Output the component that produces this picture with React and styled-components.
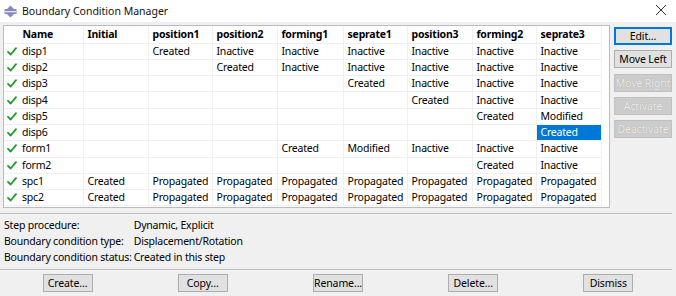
import React from "react";
import styled, { createGlobalStyle } from "styled-components";

const Global = createGlobalStyle`
  html, body { margin: 0; padding: 0; background: #f0f0f0; }
  * { box-sizing: border-box; }
`;

const Window = styled.div`
  width: 676px;
  height: 296px;
  background: #f0f0f0;
  font-family: "Noto Sans", "Noto Sans CJK SC", sans-serif;
  font-size: 10.5px;
  letter-spacing: -0.2px;
  line-height: 16px;
  color: #000;
  overflow: hidden;
  display: flex;
  flex-direction: column;
`;

const TitleBar = styled.div`
  height: 22px;
  background: #ffffff;
  display: flex;
  align-items: center;
  padding-left: 4px;
  position: relative;
`;

const TitleText = styled.span`
  margin-left: 5px;
  font-size: 10.5px;
  letter-spacing: 0;
  line-height: 22px;
  color: #111;
`;

const Close = styled.span`
  position: absolute;
  right: 9px;
  top: 4px;
  width: 12px;
  height: 12px;
  display: flex;
`;

const Body = styled.div`
  padding: 3px 4px 0 3px;
  display: flex;
  flex-direction: column;
`;

const TopRow = styled.div`
  display: flex;
  gap: 4px;
  align-items: flex-start;
`;

const TableFrame = styled.div`
  width: 607px;
  height: 183px;
  background: #fff;
  border: 1px solid #b9bcc2;
  overflow: hidden;
`;

const Grid = styled.table`
  border-collapse: collapse;
  table-layout: fixed;
  width: 597px;
`;

const Col = styled.col`
  width: ${(p) => p.$w}px;
`;

const HeadRow = styled.tr`
  height: 17px;
`;

const Row = styled.tr`
  height: 16.3px;
`;

const Th = styled.th`
  padding: 0 0 0 4px;
  text-align: left;
  font-weight: bold;
  white-space: nowrap;
  border-right: 1px solid ${(p) => (p.$noLine ? "transparent" : "#f0f0f0")};
  border-bottom: 1px solid #f0f0f0;
  line-height: 15px;
  overflow: hidden;
`;

const Td = styled.td`
  padding: 0 0 0 4px;
  white-space: nowrap;
  line-height: 15px;
  overflow: hidden;
  border-right: 1px solid #f0f0f0;
  border-bottom: 1px solid #f0f0f0;
  background: ${(p) => (p.$sel ? "#0078d7" : "transparent")};
  color: ${(p) => (p.$sel ? "#fff" : "#000")};
`;

const CheckCell = styled.td`
  padding: 0 0 0 3px;
  line-height: 0;
  border-bottom: 1px solid #f0f0f0;
  vertical-align: middle;
  & svg { display: block; }
`;

const SideButtons = styled.div`
  display: flex;
  flex-direction: column;
  gap: 5.3px;
  margin-top: 2px;
  width: 58px;
`;

const Button = styled.button`
  font-family: inherit;
  font-size: 10.5px;
  letter-spacing: -0.1px;
  height: ${(p) => p.$h || 18}px;
  width: ${(p) => p.$w || 58}px;
  padding: 0;
  border: 1px solid ${(p) => (p.$focus ? "#0078d7" : p.disabled ? "#bfbfbf" : "#adadad")};
  box-shadow: ${(p) => (p.$focus ? "inset 0 0 0 1px #0078d7" : "none")};
  background: ${(p) => (p.disabled ? "#cccccc" : "#e1e1e1")};
  color: ${(p) => (p.disabled ? "#ececec" : "#000")};
  text-shadow: ${(p) => (p.disabled ? "0 0 1px #9c9c9c" : "none")};
  line-height: 16px;
  white-space: nowrap;
  overflow: hidden;
`;

const Separator = styled.div`
  height: 1px;
  background: #bdbdbd;
  margin: ${(p) => p.$m};
  width: 672px;
`;

const Info = styled.div`
  display: grid;
  grid-template-columns: max-content auto;
  column-gap: 2px;
  grid-auto-rows: 16px;
  padding-left: 1px;
  line-height: 16px;
  white-space: nowrap;
`;

const ButtonRow = styled.div`
  display: flex;
  justify-content: space-around;
  width: 676px;
  margin-left: -3px;
  margin-top: 4px;
`;

const Check = () => (
  <svg width="10" height="9" viewBox="0 0 10 9">
    <path d="M1 4.8 L3.7 7.5 L9 1.2" stroke="#1f9a2a" strokeWidth="1.8" fill="none" strokeLinecap="round" strokeLinejoin="round" />
  </svg>
);

const AppIcon = () => (
  <svg width="13" height="13" viewBox="0 0 13 13">
    <path d="M6.5 0.5 L10 4 L12.5 4 L12.5 9 L10 9 L6.5 12.5 L3 9 L0.5 9 L0.5 4 L3 4 Z" fill="#8a86c4" />
    <rect x="0.5" y="6" width="12" height="1.3" fill="#e6e4f4" />
  </svg>
);

const cols = ["Initial", "position1", "position2", "forming1", "seprate1", "position3", "forming2", "seprate3"];
const P = "Propagated";
const rows = [
  ["disp1", ["", "Created", "Inactive", "Inactive", "Inactive", "Inactive", "Inactive", "Inactive"]],
  ["disp2", ["", "", "Created", "Inactive", "Inactive", "Inactive", "Inactive", "Inactive"]],
  ["disp3", ["", "", "", "", "Created", "Inactive", "Inactive", "Inactive"]],
  ["disp4", ["", "", "", "", "", "Created", "Inactive", "Inactive"]],
  ["disp5", ["", "", "", "", "", "", "Created", "Modified"]],
  ["disp6", ["", "", "", "", "", "", "", "Created"]],
  ["form1", ["", "", "", "Created", "Modified", "Inactive", "Inactive", "Inactive"]],
  ["form2", ["", "", "", "", "", "", "Created", "Inactive"]],
  ["spc1", ["Created", P, P, P, P, P, P, P]],
  ["spc2", ["Created", P, P, P, P, P, P, P]],
];

const widths = [14, 65, 65, 64, 65, 66, 64, 65, 64, 65];

export default function App() {
  return (
    <>
      <Global />
      <Window>
        <TitleBar>
          <AppIcon />
          <TitleText>Boundary Condition Manager</TitleText>
          <Close>
            <svg width="12" height="12" viewBox="0 0 12 12">
              <path d="M1 1 L11 11 M11 1 L1 11" stroke="#333" strokeWidth="1" />
            </svg>
          </Close>
        </TitleBar>
        <Body>
          <TopRow>
            <TableFrame>
              <Grid>
                <colgroup>
                  {widths.map((w, i) => (
                    <Col key={i} $w={w} />
                  ))}
                </colgroup>
                <thead>
                  <HeadRow>
                    <Th $noLine />
                    <Th>Name</Th>
                    {cols.map((c) => (
                      <Th key={c}>{c}</Th>
                    ))}
                  </HeadRow>
                </thead>
                <tbody>
                  {rows.map(([name, vals]) => (
                    <Row key={name}>
                      <CheckCell>
                        <Check />
                      </CheckCell>
                      <Td>{name}</Td>
                      {vals.map((v, i) => (
                        <Td key={i} $sel={name === "disp6" && i === 7}>
                          {v}
                        </Td>
                      ))}
                    </Row>
                  ))}
                </tbody>
              </Grid>
            </TableFrame>
            <SideButtons>
              <Button $focus>Edit...</Button>
              <Button>Move Left</Button>
              <Button disabled>Move Right</Button>
              <Button disabled>Activate</Button>
              <Button disabled>Deactivate</Button>
            </SideButtons>
          </TopRow>
          <Separator $m="5px 0 3px -3px" />
          <Info>
            <span>Step procedure:</span>
            <span>Dynamic, Explicit</span>
            <span>Boundary condition type:</span>
            <span>Displacement/Rotation</span>
            <span>Boundary condition status:</span>
            <span>Created in this step</span>
          </Info>
          <Separator $m="4px 0 0 -3px" />
          <ButtonRow>
            <Button $w={50}>Create...</Button>
            <Button $w={50}>Copy...</Button>
            <Button $w={50}>Rename...</Button>
            <Button $w={50}>Delete...</Button>
            <Button $w={50}>Dismiss</Button>
          </ButtonRow>
        </Body>
      </Window>
    </>
  );
}
